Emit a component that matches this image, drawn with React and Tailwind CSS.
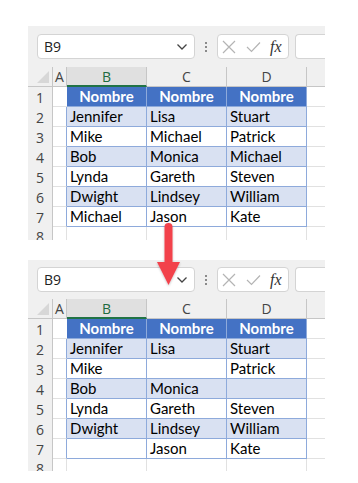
import React from 'react';

const before = [
    ['Jennifer', 'Lisa', 'Stuart'],
    ['Mike', 'Michael', 'Patrick'],
    ['Bob', 'Monica', 'Michael'],
    ['Lynda', 'Gareth', 'Steven'],
    ['Dwight', 'Lindsey', 'William'],
    ['Michael', 'Jason', 'Kate'],
];

const after = [
    ['Jennifer', 'Lisa', 'Stuart'],
    ['Mike', '', 'Patrick'],
    ['Bob', 'Monica', ''],
    ['Lynda', 'Gareth', 'Steven'],
    ['Dwight', 'Lindsey', 'William'],
    ['', 'Jason', 'Kate'],
];

const cellFont = { fontFamily: 'Lato, "Open Sans", sans-serif' };
const uiFont = { fontFamily: '"Open Sans", "Noto Sans", sans-serif' };

const FormulaBar = () => (
    <div className="flex items-center h-[25px]">
        {/* Name box */}
        <div className="ml-[9px] w-[158px] h-[25px] bg-white border border-[#d4d4d4] rounded-[4px] flex items-center justify-between pl-[6px] pr-[6px]">
            <span className="text-[14px] text-[#222]" style={uiFont}>B9</span>
            <svg width="12" height="8" viewBox="0 0 12 8">
                <path d="M1.5 1.5 L6 6 L10.5 1.5" fill="none" stroke="#444" strokeWidth="1.3" />
            </svg>
        </div>
        {/* dots */}
        <div className="w-[22px] flex flex-col items-center gap-[2px]">
            <div className="w-[2px] h-[2px] bg-[#8a8a8a]" />
            <div className="w-[2px] h-[2px] bg-[#8a8a8a]" />
            <div className="w-[2px] h-[2px] bg-[#8a8a8a]" />
        </div>
        {/* cancel / enter / fx */}
        <div className="w-[72px] h-[25px] bg-white border border-[#d4d4d4] rounded-[4px] flex items-center pl-[4px]">
            <svg width="14" height="14" viewBox="0 0 14 14">
                <path d="M1 1 L13 13 M13 1 L1 13" stroke="#b4b4b4" strokeWidth="1.2" />
            </svg>
            <svg className="ml-[10px]" width="15" height="12" viewBox="0 0 15 12">
                <path d="M1 6 L5.5 10.5 L14 1.5" fill="none" stroke="#b4b4b4" strokeWidth="1.2" />
            </svg>
            <span
                className="ml-[9px] text-[16px] italic text-[#333] leading-none"
                style={{ fontFamily: '"Liberation Serif", "DejaVu Serif", serif' }}
            >
                fx
            </span>
        </div>
        <div className="ml-[6px] flex-1 h-[25px] bg-white border border-r-0 border-[#d4d4d4] rounded-l-[4px]" />
    </div>
);

const Sheet = ({ rows, pad, lastH }) => (
    <div className={`ml-[28px] w-[297px] bg-[#f0f0f0] ${pad}`}>
        <FormulaBar />
        <div className={pad === 'pt-[8px]' ? 'mt-[8px]' : 'mt-[7px]'}>
            {/* column headers */}
            <div className="flex h-[20px] text-[14px] text-[#444]" style={uiFont}>
                <div className="w-[25px] border-b border-r border-[#c6c6c6] flex items-end justify-end pr-[3px] pb-[3px]">
                    <svg width="12" height="12" viewBox="0 0 12 12">
                        <path d="M12 0 L12 12 L0 12 Z" fill="#d7d7d7" />
                    </svg>
                </div>
                <div className="w-[14px] border-b border-r border-[#c6c6c6] flex items-center justify-center">A</div>
                <div className="w-[80px] bg-[#e0e0e0] border-b-2 border-b-[#217346] border-r border-r-[#c6c6c6] flex items-center justify-center text-[#1e6b40]">B</div>
                <div className="w-[80px] border-b border-r border-[#c6c6c6] flex items-center justify-center">C</div>
                <div className="w-[80px] border-b border-r border-[#c6c6c6] flex items-center justify-center">D</div>
                <div className="w-[18px] border-b border-[#c6c6c6]" />
            </div>

            {/* table header row */}
            <div className="flex h-[20px]">
                <div className="w-[25px] border-r border-[#c6c6c6] flex items-center justify-center text-[14px] text-[#444]" style={uiFont}>1</div>
                <div className="w-[14px] bg-white border-b border-[#e1e1e1]" />
                {['Nombre', 'Nombre', 'Nombre'].map((h, i) => (
                    <div
                        key={i}
                        className="w-[80px] bg-[#4472c4] border-b border-r border-[#8eaadb] flex items-center justify-center text-[15px] font-bold text-white"
                        style={cellFont}
                    >
                        {h}
                    </div>
                ))}
                <div className="w-[18px] bg-white border-b border-[#e1e1e1]" />
            </div>

            {rows.map((r, i) => (
                <div key={i} className="flex h-[20px]">
                    <div className="w-[25px] border-r border-[#c6c6c6] flex items-center justify-center text-[14px] text-[#444]" style={uiFont}>
                        {i + 2}
                    </div>
                    <div className="w-[14px] bg-white border-b border-r border-b-[#e1e1e1] border-r-[#8eaadb]" />
                    {r.map((v, j) => (
                        <div
                            key={j}
                            className={`w-[80px] border-b border-r border-[#8eaadb] flex items-center pl-[3px] text-[15px] text-black ${i % 2 === 0 ? 'bg-[#d9e1f2]' : 'bg-white'}`}
                            style={cellFont}
                        >
                            {v}
                        </div>
                    ))}
                    <div className="w-[18px] bg-white border-b border-[#e1e1e1]" />
                </div>
            ))}

            {/* row 8, cut off */}
            <div className={`flex ${lastH} overflow-hidden`}>
                <div className="w-[25px] border-r border-[#c6c6c6] flex justify-center text-[14px] text-[#444] leading-[20px]" style={uiFont}>8</div>
                <div className="w-[14px] bg-white border-r border-[#e1e1e1]" />
                <div className="w-[80px] bg-white border-r border-[#e1e1e1]" />
                <div className="w-[80px] bg-white border-r border-[#e1e1e1]" />
                <div className="w-[80px] bg-white border-r border-[#e1e1e1]" />
                <div className="w-[18px] bg-white" />
            </div>
        </div>
    </div>
);

export default function App() {
    return (
        <div className="relative w-[358px] h-[483px] bg-white overflow-hidden">
            <div className="pt-[26px]">
                <Sheet rows={before} pad="pt-[8px]" lastH="h-[13px]" />
            </div>
            <div className="mt-[20px]">
                <Sheet rows={after} pad="pt-[7px]" lastH="h-[12px]" />
            </div>

            {/* red arrow */}
            <svg className="absolute left-[155px] top-[222px]" width="27" height="66" viewBox="0 0 27 66">
                <defs>
                    <filter id="sh" x="-30%" y="-10%" width="160%" height="130%">
                        <feDropShadow dx="0" dy="1" stdDeviation="1" floodColor="#000" floodOpacity="0.25" />
                    </filter>
                </defs>
                <g filter="url(#sh)">
                    <path d="M9.5 5 A4 4 0 0 1 17.5 5 L17.5 40 L25 40 L13.5 63 L2 40 L9.5 40 Z" fill="#f2424c" />
                </g>
            </svg>
        </div>
    );
}
